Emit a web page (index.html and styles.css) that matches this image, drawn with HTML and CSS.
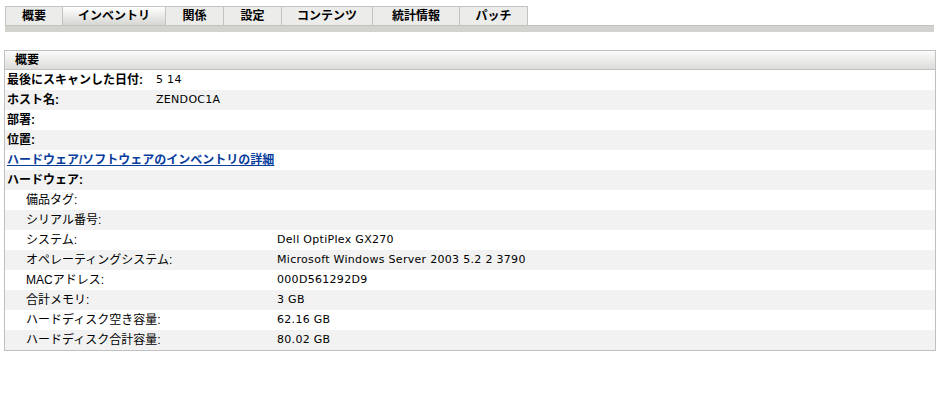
FILE: index.html
```html
<!DOCTYPE html>
<html lang="ja">
<head>
    <meta charset="UTF-8">
    <title>インベントリ</title>
    <link rel="stylesheet" href="styles.css">
</head>
<body>
    <div class="tabs">
        <div class="tab">概要</div>
        <div class="tab active">インベントリ</div>
        <div class="tab">関係</div>
        <div class="tab">設定</div>
        <div class="tab">コンテンツ</div>
        <div class="tab wide">統計情報</div>
        <div class="tab mid">パッチ</div>
    </div>
    <div class="tabstrip"></div>

    <div class="panel">
        <div class="panel-head">概要</div>
        <div class="row main">
            <span class="label">最後にスキャンした日付:</span><span class="val">5 14</span>
        </div>
        <div class="row main">
            <span class="label">ホスト名:</span><span class="val">ZENDOC1A</span>
        </div>
        <div class="row main">
            <span class="label">部署:</span><span class="val"></span>
        </div>
        <div class="row main">
            <span class="label">位置:</span><span class="val"></span>
        </div>
        <div class="row main">
            <a class="details" href="#">ハードウェア/ソフトウェアのインベントリの詳細</a>
        </div>
        <div class="row main">
            <span class="label">ハードウェア:</span><span class="val"></span>
        </div>
        <div class="row hw">
            <span>備品タグ:</span><span class="val"></span>
        </div>
        <div class="row hw">
            <span>シリアル番号:</span><span class="val"></span>
        </div>
        <div class="row hw">
            <span>システム:</span><span class="val">Dell OptiPlex GX270</span>
        </div>
        <div class="row hw">
            <span>オペレーティングシステム:</span><span class="val">Microsoft Windows Server 2003 5.2 2 3790</span>
        </div>
        <div class="row hw">
            <span>MACアドレス:</span><span class="val">000D561292D9</span>
        </div>
        <div class="row hw">
            <span>合計メモリ:</span><span class="val">3 GB</span>
        </div>
        <div class="row hw">
            <span>ハードディスク空き容量:</span><span class="val">62.16 GB</span>
        </div>
        <div class="row hw">
            <span>ハードディスク合計容量:</span><span class="val">80.02 GB</span>
        </div>
    </div>
</body>
</html>
```

FILE: styles.css
```css
body {
    margin: 0;
    background-color: #fff;
    color: #000;
    font-family: "Liberation Sans", "Noto Sans CJK JP", sans-serif;
    font-size: 12px;
}
.tabs {
    display: flex;
    margin: 6px 0 0 5px;
}
.tab {
    height: 19px;
    line-height: 19px;
    min-width: 58px;
    padding: 0 15px;
    box-sizing: border-box;
    text-align: center;
    font-weight: bold;
    background-color: #ececea;
    border-top: 1px solid #c4c4c2;
    border-right: 1px solid #c4c4c2;
}
.tab:first-child {
    border-left: 1px solid #c4c4c2;
}
.tab.wide {
    min-width: 87px;
}
.tab.mid {
    min-width: 68px;
}
.tab.active {
    background: linear-gradient(#ffffff, #d6d6d2);
}
.tabstrip {
    margin-left: 5px;
    width: 929px;
    height: 6px;
    background-color: #d2d2ce;
    border-top: 1px solid #c2c2be;
}
.panel {
    margin: 18px 10px 0 4px;
    border: 1px solid #c0c0c0;
}
.panel-head {
    height: 18px;
    line-height: 18px;
    padding-left: 10px;
    font-weight: bold;
    background: linear-gradient(#fbfbfb, #dcdcda);
    border-bottom: 1px solid #c0c0c0;
}
.row {
    display: grid;
    height: 20px;
    line-height: 20px;
    white-space: nowrap;
}
.row:nth-child(odd) {
    background-color: #f2f2f2;
}
.row.main {
    grid-template-columns: 149px 1fr;
    padding-left: 2px;
}
.row.hw {
    grid-template-columns: 251px 1fr;
    padding-left: 21px;
}
.label {
    font-weight: bold;
}
.val {
    font-family: "DejaVu Sans", sans-serif;
    font-size: 11px;
    letter-spacing: 0.3px;
}
.details {
    grid-column: 1 / 3;
    color: #083c9c;
    font-weight: bold;
}
```
